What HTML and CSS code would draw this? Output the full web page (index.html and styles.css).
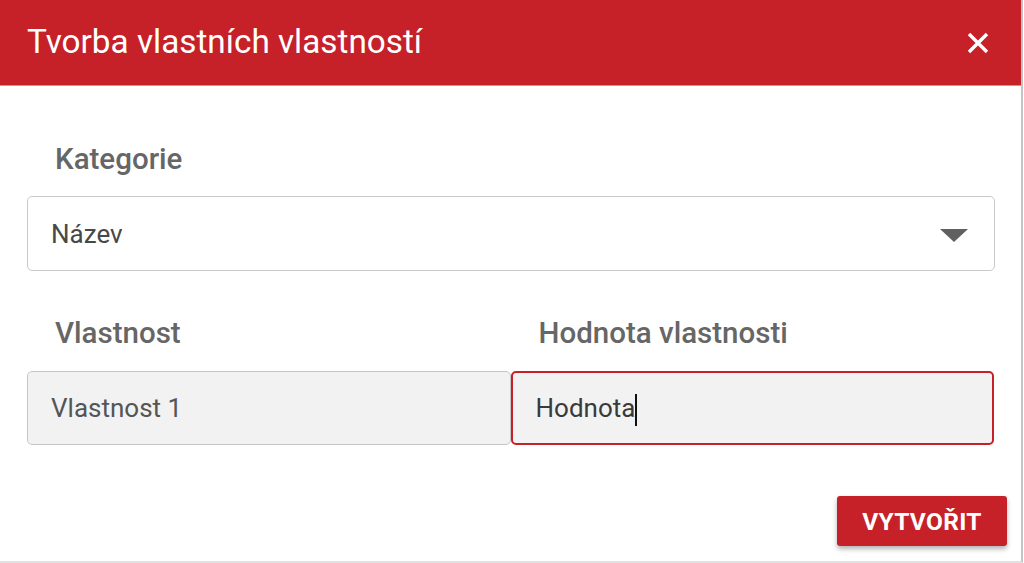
FILE: index.html
```html
<!DOCTYPE html>
<html lang="cs">
<head>
<meta charset="utf-8">
<link rel="stylesheet" href="styles.css">
</head>
<body>
<div class="dialog">
  <div class="header">
    <h1 class="title">Tvorba vlastních vlastností</h1>
    <button class="close" aria-label="Zavřít">
      <svg width="24" height="22" viewBox="0 0 24 22"><path d="M3 2 L21 20 M21 2 L3 20" stroke="#fff" stroke-width="3.4" stroke-linecap="butt"/></svg>
    </button>
  </div>
  <div class="body">
    <div class="label cat">Kategorie</div>
    <div class="select">
      <span>Název</span>
      <svg class="arrow" width="28" height="14" viewBox="0 0 28 14"><path d="M0 1 L28 1 L14 14 Z" fill="#606060"/></svg>
    </div>
    <div class="row">
      <div class="field">
        <div class="label">Vlastnost</div>
        <div class="input">Vlastnost 1</div>
      </div>
      <div class="field">
        <div class="label">Hodnota vlastnosti</div>
        <div class="input focus">Hodnota<span class="caret"></span></div>
      </div>
    </div>
    <div class="actions">
      <button class="btn">VYTVOŘIT</button>
    </div>
  </div>
</div>
</body>
</html>
```
FILE: styles.css
```css
html, body {
  margin: 0;
  padding: 0;
  background: #fff;
  font-family: Roboto, "Liberation Sans", sans-serif;
}
.dialog {
  width: 1021px;
  height: 561px;
  border-right: 2px solid #c4c4c4;
  border-bottom: 2px solid #e2e2e2;
  background: #fff;
  display: flex;
  flex-direction: column;
}
.header {
  background: #c62028;
  border-bottom: 1px solid #e8868a;
  display: flex;
  align-items: center;
  justify-content: space-between;
  padding: 0 31px 0 27px;
  box-sizing: border-box;
  height: 86px;
}
.title {
  margin: 0;
  color: #fff;
  font-size: 33.3px;
  font-weight: 400;
  line-height: 40px;
  padding-bottom: 1px;
}
.close {
  background: none;
  border: 0;
  padding: 0;
  width: 24px;
  height: 22px;
  display: flex;
}
.body {
  padding: 0 27px;
  display: flex;
  flex-direction: column;
}
.label {
  color: #666;
  font-size: 29.5px;
  font-weight: 500;
  padding-left: 28px;
  line-height: 34px;
}
.cat {
  margin-top: 56px;
  margin-bottom: 20px;
}
.select {
  width: 968px;
  height: 75px;
  box-sizing: border-box;
  border: 1.5px solid #c9c9c9;
  border-radius: 5px;
  display: flex;
  align-items: center;
  justify-content: space-between;
  padding: 0 26px 0 23px;
  color: #484848;
  font-size: 26px;
}
.arrow {
  margin-top: 2px;
}
.row {
  display: flex;
  margin-top: 45px;
}
.field {
  display: flex;
  flex-direction: column;
  width: 484px;
}
.field .label {
  margin-bottom: 21px;
}
.input {
  height: 74px;
  box-sizing: border-box;
  background: #f2f2f2;
  border: 1.5px solid #c6c6c6;
  border-radius: 5px;
  display: flex;
  align-items: center;
  padding-left: 23px;
  color: #555;
  font-size: 26px;
}
.input.focus {
  border: 2.5px solid #c62028;
  color: #3a3a3a;
}
.caret {
  display: inline-block;
  width: 1.5px;
  height: 32px;
  background: #111;
  margin-top: 4px;
}
.actions {
  display: flex;
  justify-content: flex-end;
  margin-top: 51px;
  margin-right: -13px;
}
.btn {
  width: 170px;
  height: 50px;
  background: #c62028;
  color: #fff;
  border: 0;
  border-radius: 3px;
  font-family: Roboto, "Liberation Sans", sans-serif;
  font-weight: 700;
  font-size: 24.5px;
  letter-spacing: 0.3px;
  box-shadow: 0 3px 5px rgba(0,0,0,0.3);
}
```
